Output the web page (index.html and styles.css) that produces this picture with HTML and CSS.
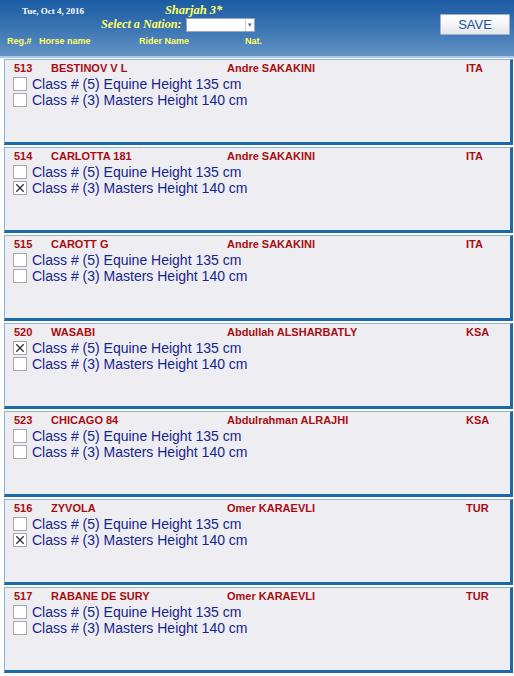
FILE: index.html
```html
<!DOCTYPE html>
<html>
<head>
<meta charset="utf-8">
<link rel="stylesheet" href="styles.css">
</head>
<body>
<header class="top">
  <div class="top-left">
    <div class="row1">
      <span class="date">Tue, Oct 4, 2016</span>
      <span class="event">Sharjah 3*</span>
    </div>
    <div class="row2">
      <span class="nation-label">Select a Nation:</span>
      <span class="select"><span class="arrow">▾</span></span>
    </div>
    <div class="row3">
      <span class="h-reg">Reg.#</span>
      <span class="h-horse">Horse name</span>
      <span class="h-rider">Rider Name</span>
      <span class="h-nat">Nat.</span>
    </div>
  </div>
  <button class="save">SAVE</button>
</header>
<main class="list">
  <section class="card">
    <div class="head"><span>513</span><span>BESTINOV V L</span><span>Andre SAKAKINI</span><span>ITA</span></div>
    <div class="opt"><span class="cb"></span>Class # (5) Equine Height 135 cm</div>
    <div class="opt"><span class="cb"></span>Class # (3) Masters Height 140 cm</div>
  </section>
  <section class="card">
    <div class="head"><span>514</span><span>CARLOTTA 181</span><span>Andre SAKAKINI</span><span>ITA</span></div>
    <div class="opt"><span class="cb"></span>Class # (5) Equine Height 135 cm</div>
    <div class="opt"><span class="cb checked"><svg viewBox="0 0 13 13"><path d="M2.5 2.5L10.5 10.5M10.5 2.5L2.5 10.5"/></svg></span>Class # (3) Masters Height 140 cm</div>
  </section>
  <section class="card">
    <div class="head"><span>515</span><span>CAROTT G</span><span>Andre SAKAKINI</span><span>ITA</span></div>
    <div class="opt"><span class="cb"></span>Class # (5) Equine Height 135 cm</div>
    <div class="opt"><span class="cb"></span>Class # (3) Masters Height 140 cm</div>
  </section>
  <section class="card">
    <div class="head"><span>520</span><span>WASABI</span><span>Abdullah ALSHARBATLY</span><span>KSA</span></div>
    <div class="opt"><span class="cb checked"><svg viewBox="0 0 13 13"><path d="M2.5 2.5L10.5 10.5M10.5 2.5L2.5 10.5"/></svg></span>Class # (5) Equine Height 135 cm</div>
    <div class="opt"><span class="cb"></span>Class # (3) Masters Height 140 cm</div>
  </section>
  <section class="card">
    <div class="head"><span>523</span><span>CHICAGO 84</span><span>Abdulrahman ALRAJHI</span><span>KSA</span></div>
    <div class="opt"><span class="cb"></span>Class # (5) Equine Height 135 cm</div>
    <div class="opt"><span class="cb"></span>Class # (3) Masters Height 140 cm</div>
  </section>
  <section class="card">
    <div class="head"><span>516</span><span>ZYVOLA</span><span>Omer KARAEVLI</span><span>TUR</span></div>
    <div class="opt"><span class="cb"></span>Class # (5) Equine Height 135 cm</div>
    <div class="opt"><span class="cb checked"><svg viewBox="0 0 13 13"><path d="M2.5 2.5L10.5 10.5M10.5 2.5L2.5 10.5"/></svg></span>Class # (3) Masters Height 140 cm</div>
  </section>
  <section class="card">
    <div class="head"><span>517</span><span>RABANE DE SURY</span><span>Omer KARAEVLI</span><span>TUR</span></div>
    <div class="opt"><span class="cb"></span>Class # (5) Equine Height 135 cm</div>
    <div class="opt"><span class="cb"></span>Class # (3) Masters Height 140 cm</div>
  </section>
</main>
</body>
</html>
```
FILE: styles.css
```css
html, body {
  margin: 0;
  padding: 0;
  background: #ffffff;
}
body {
  width: 514px;
  height: 676px;
  overflow: hidden;
  font-family: "Liberation Sans", Arial, sans-serif;
}
.top {
  height: 56px;
  background: linear-gradient(to bottom, #1b5ba3 0%, #3a74b3 50%, #6494c5 100%);
  border-bottom: 2px solid #aac9e8;
  display: flex;
  justify-content: space-between;
  align-items: flex-start;
}
.top-left {
  display: flex;
  flex-direction: column;
}
.row1 {
  display: flex;
  align-items: baseline;
  height: 16px;
  padding-top: 3px;
}
.date {
  margin-left: 22px;
  font-family: "Liberation Serif", "Times New Roman", serif;
  font-weight: bold;
  font-size: 9px;
  color: #ffffff;
}
.event {
  margin-left: 81px;
  font-family: "Liberation Serif", "Times New Roman", serif;
  font-weight: bold;
  font-style: italic;
  font-size: 12.5px;
  color: #ffff66;
}
.row2 {
  display: flex;
  align-items: center;
  height: 15px;
  margin-top: -2px;
}
.nation-label {
  margin-left: 101px;
  font-family: "Liberation Serif", "Times New Roman", serif;
  font-weight: bold;
  font-style: italic;
  font-size: 12.2px;
  color: #ffff66;
  width: 85px;
  white-space: nowrap;
  flex: none;
}
.select {
  width: 67px;
  height: 12px;
  background: #ffffff;
  border: 1px solid #9aa6b4;
  display: flex;
  justify-content: flex-end;
  flex: none;
}
.arrow {
  width: 8px;
  border-left: 1px solid #c8d0da;
  font-size: 7px;
  line-height: 12px;
  color: #4a6a9a;
  text-align: center;
}
.row3 {
  display: flex;
  align-items: center;
  height: 13px;
  margin-top: 2px;
  font-weight: bold;
  font-size: 9px;
  color: #ffff66;
  white-space: nowrap;
}
.h-reg { margin-left: 7px; width: 32px; }
.h-horse { width: 100px; }
.h-rider { width: 106px; }
.save {
  margin: 14px 4px 0 0;
  width: 70px;
  height: 21px;
  padding: 0;
  border: 1px solid #9fb3c8;
  border-radius: 1px;
  background: linear-gradient(to bottom, #ffffff 0%, #f4f5f7 50%, #e4e6ea 100%);
  font-family: "Liberation Sans", Arial, sans-serif;
  font-size: 13px;
  color: #1d4fa0;
}
.list {
  padding: 1px 1px 0 4px;
  display: flex;
  flex-direction: column;
  gap: 2px;
}
.card {
  height: 82px;
  background: #eeedf2;
  border-top: 1px solid #8fb3dc;
  border-left: 1px solid #8fb3dc;
  border-right: 3px solid #1a6aaa;
  border-bottom: 3px solid #1a6aaa;
  padding-left: 8px;
  box-sizing: content-box;
}
.head {
  display: grid;
  grid-template-columns: 37px 176px 239px auto;
  font-weight: bold;
  font-size: 11px;
  line-height: 13px;
  color: #a80d10;
  padding-top: 2px;
  padding-left: 1px;
  height: 16px;
  box-sizing: border-box;
}
.opt {
  display: flex;
  align-items: center;
  height: 16px;
  font-size: 14px;
  color: #16268a;
}
.cb {
  width: 12px;
  height: 12px;
  border: 1px solid #a3a7ae;
  background: #ffffff;
  margin-right: 5px;
  flex: none;
  display: flex;
}
.cb svg {
  width: 12px;
  height: 12px;
}
.cb svg path {
  stroke: #333333;
  stroke-width: 1.5;
  fill: none;
}
```
